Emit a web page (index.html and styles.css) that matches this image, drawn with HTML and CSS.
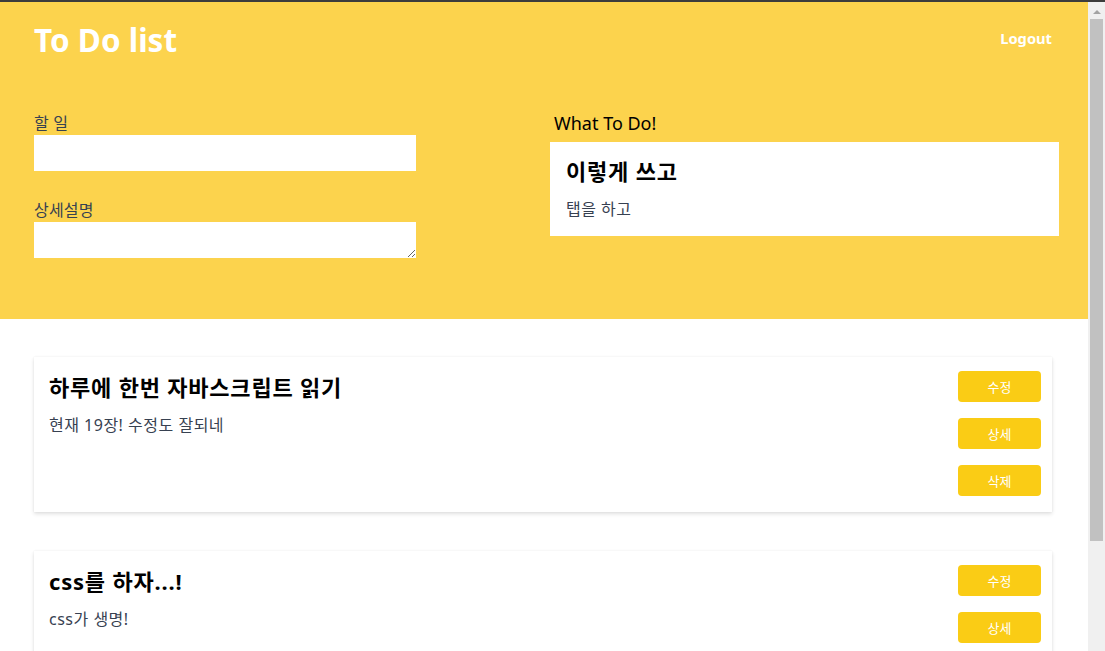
FILE: index.html
```html
<!DOCTYPE html>
<html lang="ko">
<head>
<meta charset="utf-8">
<title>To Do list</title>
<link rel="stylesheet" href="styles.css">
</head>
<body>
<div class="window">
  <div class="page">
    <header class="hero">
      <div class="topbar">
        <h1 class="brand">To Do list</h1>
        <a class="logout" href="#">Logout</a>
      </div>
      <div class="compose">
        <form class="form">
          <label class="field">
            <span class="label">할 일</span>
            <input class="input" type="text">
          </label>
          <label class="field">
            <span class="label">상세설명</span>
            <textarea class="input area"></textarea>
          </label>
        </form>
        <section class="preview">
          <h2 class="preview-heading">What To Do!</h2>
          <div class="preview-card">
            <h3 class="item-title">이렇게 쓰고</h3>
            <p class="item-desc">탭을 하고</p>
          </div>
        </section>
      </div>
    </header>
    <main class="list">
      <article class="todo">
        <div class="todo-body">
          <h3 class="item-title">하루에 한번 자바스크립트 읽기</h3>
          <p class="item-desc">현재 19장! 수정도 잘되네</p>
        </div>
        <div class="actions">
          <button class="btn">수정</button>
          <button class="btn">상세</button>
          <button class="btn">삭제</button>
        </div>
      </article>
      <article class="todo">
        <div class="todo-body">
          <h3 class="item-title">css를 하자...!</h3>
          <p class="item-desc">css가 생명!</p>
        </div>
        <div class="actions">
          <button class="btn">수정</button>
          <button class="btn">상세</button>
          <button class="btn">삭제</button>
        </div>
      </article>
    </main>
  </div>
  <div class="scrollbar">
    <span class="arrow"></span>
    <span class="thumb"></span>
  </div>
</div>
</body>
</html>
```
FILE: styles.css
```css
html, body {
  margin: 0;
  height: 100%;
  overflow: hidden;
}
body {
  box-sizing: border-box;
  border-top: 2px solid #3c3c3c;
  font-family: "Noto Sans", "Noto Sans CJK KR", sans-serif;
  background: #fff;
}
.window {
  display: flex;
  height: 100%;
}
.page {
  flex: 1;
  min-width: 0;
  overflow: hidden;
}
.scrollbar {
  flex: none;
  width: 17px;
  background: #f0f0f0;
  display: flex;
  flex-direction: column;
  align-items: center;
}
.arrow {
  width: 0;
  height: 0;
  margin-top: 8px;
  border-left: 4px solid transparent;
  border-right: 4px solid transparent;
  border-bottom: 4px solid #a3a3a3;
}
.thumb {
  width: 13px;
  height: 522px;
  margin-top: 5px;
  background: #c1c1c1;
}
.hero {
  background: #fcd34d;
  height: 317px;
  box-sizing: border-box;
  padding: 18px 36px 0 34px;
}
.topbar {
  display: flex;
  justify-content: space-between;
  align-items: center;
  height: 40px;
}
.brand {
  margin: 0;
  font-size: 31.5px;
  line-height: 40px;
  font-weight: 700;
  color: #fff;
}
.logout {
  margin-bottom: 4px;
  font-size: 14.7px;
  font-weight: 700;
  color: #fff;
  text-decoration: none;
}
.compose {
  display: grid;
  grid-template-columns: 516px 509px;
  margin-top: 51px;
}
.form {
  margin: 0;
}
.field {
  display: flex;
  flex-direction: column;
  width: 382px;
}
.field + .field {
  margin-top: 27px;
}
.label {
  font-size: 16px;
  line-height: 24px;
  letter-spacing: 0.2px;
  color: #374151;
}
.input {
  display: block;
  width: 382px;
  height: 36px;
  margin: 0;
  padding: 0 8px;
  border: 0;
  box-sizing: border-box;
  background: #fff;
  font-family: inherit;
  outline: none;
}
.preview-heading {
  margin: 0 0 7px 4px;
  font-size: 18px;
  line-height: 24px;
  font-weight: 400;
  color: #000;
}
.preview-card {
  background: #fff;
  padding: 15px 16px;
}
.item-title {
  margin: 0;
  font-size: 22px;
  line-height: 28px;
  font-weight: 700;
  letter-spacing: 0.8px;
  color: #000;
}
.item-desc {
  margin: 12px 0 0;
  font-size: 16px;
  line-height: 24px;
  letter-spacing: 0.5px;
  color: #374151;
}
.list {
  display: flex;
  flex-direction: column;
  gap: 39px;
  padding: 38px 36px 0 34px;
}
.todo {
  display: flex;
  justify-content: space-between;
  background: #fff;
  padding: 14px 11px 16px 15px;
  box-shadow: 0 2px 4px rgba(0, 0, 0, 0.12), 0 0 2px rgba(0, 0, 0, 0.06);
}
.todo-body {
  padding-top: 2px;
}
.actions {
  display: flex;
  flex-direction: column;
  gap: 16px;
}
.btn {
  width: 83px;
  height: 31px;
  padding: 0;
  border: 0;
  border-radius: 4px;
  background: #facc15;
  color: #fff;
  font-family: inherit;
  font-size: 13px;
}
```
